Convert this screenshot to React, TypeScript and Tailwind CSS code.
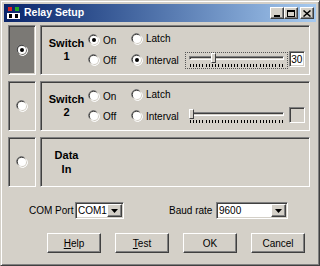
import React from "react";

const sunken =
  "border border-t-[#808080] border-l-[#808080] border-b-white border-r-white shadow-[inset_1px_1px_0_#404040,inset_-1px_-1px_0_#d4d0c8]";
const raised =
  "border border-t-white border-l-white border-b-[#404040] border-r-[#404040] shadow-[inset_-1px_-1px_0_#808080,inset_1px_1px_0_#d4d0c8]";

function Radio({ checked }: { checked?: boolean }) {
  return (
    <span className="relative inline-block w-[12px] h-[12px] shrink-0">
      <svg width="12" height="12" viewBox="0 0 12 12" className="absolute inset-0">
        <path d="M1.5 8.5 A5 5 0 0 1 8.5 1.5" stroke="#808080" fill="none" />
        <path d="M2.5 8.5 A4 4 0 0 1 8.5 2.5" stroke="#404040" fill="none" />
        <circle cx="6" cy="6" r="4" fill="#ffffff" />
        <path d="M3.5 10.5 A5 5 0 0 0 10.5 3.5" stroke="#ffffff" fill="none" />
        {checked && <circle cx="6" cy="6" r="2" fill="#000" />}
      </svg>
    </span>
  );
}

function Option({ label, checked }: { label: string; checked?: boolean }) {
  return (
    <div className="flex items-center gap-[3px] h-[14px]">
      <Radio checked={checked} />
      <span>{label}</span>
    </div>
  );
}

function Slider({ thumb, focused }: { thumb: number; focused?: boolean }) {
  const ticks = Array.from({ length: 30 }, (_, i) => i);
  return (
    <div
      className={`relative w-[103px] h-[17px] ${
        focused ? "outline outline-1 outline-dotted outline-[#555] -outline-offset-1" : ""
      }`}
    >
      <div className={`absolute left-[4px] right-[4px] top-[4px] h-[4px] ${sunken}`} />
      <div
        className="absolute top-[1px] w-[5px] h-[10px] bg-[#d4d0c8] border border-t-white border-l-white border-b-[#404040] border-r-[#404040]"
        style={{ left: thumb }}
      />
      <div className="absolute left-[5px] right-[5px] top-[12px] flex justify-between">
        {ticks.map((t) => (
          <span key={t} className="w-px h-[3px] bg-black" />
        ))}
      </div>
    </div>
  );
}

function Select({ value, width }: { value: string; width: string }) {
  return (
    <div className={`flex items-center h-[17px] bg-white ${sunken} ${width}`}>
      <span className="flex-1 pl-[2px] leading-none">{value}</span>
      <span className={`w-[15px] h-[13px] mr-px bg-[#d4d0c8] flex items-center justify-center ${raised}`}>
        <svg width="7" height="4" viewBox="0 0 7 4">
          <path d="M0 0h7L3.5 4z" fill="#000" />
        </svg>
      </span>
    </div>
  );
}

function Button({ children }: { children: React.ReactNode }) {
  return (
    <div className={`w-[54px] h-[20px] flex items-center justify-center bg-[#d4d0c8] ${raised}`}>
      {children}
    </div>
  );
}

function TitleButton({ children, className = "" }: { children: React.ReactNode; className?: string }) {
  return (
    <div className={`w-[14px] h-[12px] bg-[#d4d0c8] flex items-center justify-center ${raised} ${className}`}>
      {children}
    </div>
  );
}

function SwitchRow({ n, on, interval, value, pressed }: {
  n: number; on?: boolean; interval?: boolean; value?: string; pressed?: boolean;
}) {
  return (
    <div className="flex gap-[4px] h-[50px]">
      <div
        className={`w-[28px] flex items-center justify-center ${sunken} ${
          pressed ? "bg-[#7b7975]" : "bg-[#d4d0c8]"
        }`}
      >
        <Radio checked={pressed} />
      </div>
      <div className={`flex-1 flex items-center ${sunken}`}>
        <div className="w-[43px] ml-[4px] flex flex-col items-center font-bold text-[11px] leading-[13px]">
          <span>Switch</span>
          <span>{n}</span>
        </div>
        <div className="flex flex-col gap-[6px] w-[43px]">
          <Option label="On" checked={on} />
          <Option label="Off" />
        </div>
        <div className="flex flex-col gap-[6px]">
          <Option label="Latch" />
          <div className="flex items-center gap-[6px]">
            <Option label="Interval" checked={interval} />
            <Slider thumb={interval ? 26 : 4} focused={interval} />
          </div>
        </div>
        <div
          className={`self-end mb-[7px] ml-px w-[16px] h-[16px] flex items-center justify-center ${sunken} ${
            value ? "bg-white" : "bg-[#d4d0c8]"
          }`}
        >
          {value}
        </div>
      </div>
    </div>
  );
}

export default function App() {
  return (
    <div className="w-[320px] h-[266px] bg-[#d4d0c8] text-black text-[10px] font-['Liberation_Sans',Arial,sans-serif] border border-t-[#d4d0c8] border-l-[#d4d0c8] border-b-[#404040] border-r-[#404040] shadow-[inset_1px_1px_0_#fff,inset_-1px_-1px_0_#808080] p-[3px] flex flex-col">
      <div className="h-[18px] flex items-center bg-gradient-to-r from-[#0a246a] to-[#a6caf0] pl-[2px] pr-[2px]">
        <svg width="16" height="14" viewBox="0 0 16 14">
          <rect x="2" y="1" width="4" height="4" fill="#d22" />
          <rect x="9" y="1" width="4" height="4" fill="#2a2" />
          <rect x="1" y="7" width="13" height="6" fill="#fff" />
          <rect x="3" y="8" width="3" height="4" fill="#000" />
          <rect x="9" y="8" width="3" height="4" fill="#000" />
        </svg>
        <span className="ml-[2px] font-bold text-white text-[10.5px]">Relay Setup</span>
        <div className="ml-auto flex items-center">
          <TitleButton>
            <span className="mt-[5px] w-[6px] h-[2px] bg-black" />
          </TitleButton>
          <TitleButton>
            <span className="w-[8px] h-[7px] border border-black border-t-2" />
          </TitleButton>
          <TitleButton className="ml-[2px]">
            <svg width="8" height="7" viewBox="0 0 8 7">
              <path d="M0.5 0.5l7 6M7.5 0.5l-7 6" stroke="#000" strokeWidth="1.5" />
            </svg>
          </TitleButton>
        </div>
      </div>

      <div className="flex flex-col gap-[6px] mt-[3px] ml-[4px] mr-[6px]">
        <SwitchRow n={1} on interval value="30" pressed />
        <SwitchRow n={2} />
        <div className="flex gap-[4px] h-[50px]">
          <div className={`w-[28px] flex items-center justify-center ${sunken}`}>
            <Radio />
          </div>
          <div className={`flex-1 flex items-center ${sunken}`}>
            <div className="w-[43px] ml-[4px] flex flex-col items-center font-bold text-[11px] leading-[14px]">
              <span>Data</span>
              <span>In</span>
            </div>
          </div>
        </div>
      </div>

      <div className="flex items-center mt-[15px]">
        <span className="ml-[25px] w-[46px]">COM Port</span>
        <Select value="COM1" width="w-[49px]" />
        <span className="ml-[45px] w-[47px]">Baud rate</span>
        <Select value="9600" width="w-[72px]" />
      </div>

      <div className="flex gap-[14px] mt-[14px] ml-[43px]">
        <Button><span><u>H</u>elp</span></Button>
        <Button><span><u>T</u>est</span></Button>
        <Button>OK</Button>
        <Button>Cancel</Button>
      </div>
    </div>
  );
}
